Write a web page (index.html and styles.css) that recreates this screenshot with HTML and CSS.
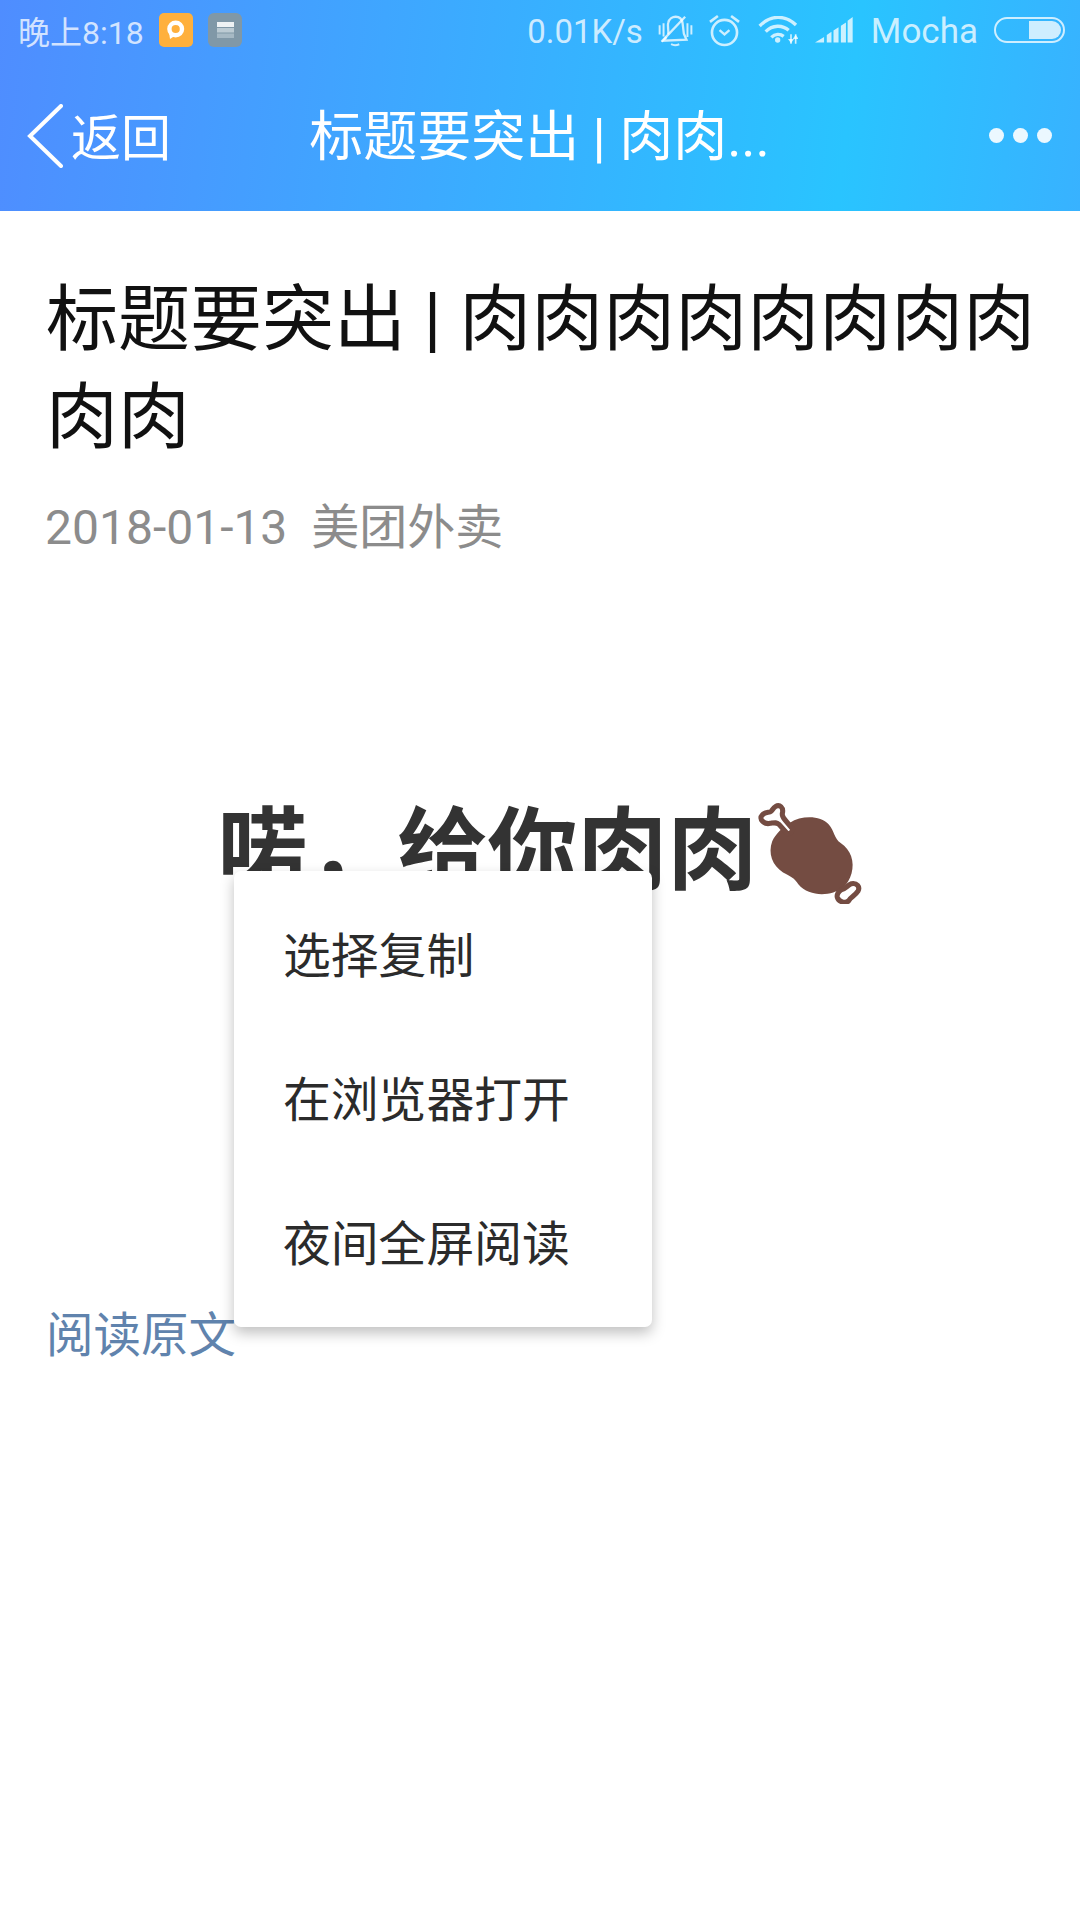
FILE: index.html
```html
<!DOCTYPE html>
<html lang="zh-CN">
<head>
<meta charset="utf-8">
<title>标题要突出</title>
<link rel="stylesheet" href="styles.css">
</head>
<body>
<div class="page">
  <header class="top">
    <div class="status">
      <div class="status-group status-left">
        <span class="clock">晚上8:18</span>
        <svg class="ico-app" viewBox="0 0 34 34"><rect width="34" height="34" rx="5" fill="#ffb03c"/><circle cx="16.700" cy="16" r="6.300" fill="none" stroke="#fff" stroke-width="4.400"/><path d="M10 19l1 7 6-4z" fill="#fff"/></svg>
        <svg class="ico-app" viewBox="0 0 34 34"><rect width="34" height="34" rx="6" fill="#8098a7"/><rect x="9" y="9" width="17" height="5" fill="#eef2f4"/><rect x="9" y="15" width="17" height="4.500" fill="#bccbd3"/><rect x="9" y="20.500" width="17" height="4.500" fill="#a6b9c4"/></svg>
      </div>
      <div class="status-group">
        <span class="speed">0.01K/s</span>
        <svg class="ico-bell" viewBox="25 22 110 100" fill="none" stroke="currentColor" stroke-width="7"><path d="M56 84c3-10-3-24 0-35 3-13 14-19 23-19 11 0 19 8 21 19l4 33 8 18-70 3 9-11"/><path d="M65 114c8 4 16 4 25 0" stroke-width="6"/><path d="M108 30 36 106"/><path d="M30 56v28M42 50v40M115 50v42M127 56v28" stroke-width="6"/></svg>
        <svg class="ico-alarm" viewBox="176 22 104 100" fill="none" stroke="currentColor" stroke-width="8"><circle cx="228" cy="78" r="38"/><path d="M213 71l15 13 15-13" stroke-width="7"/><path d="M184 46l24-18M272 46l-24-18"/></svg>
        <svg class="ico-wifi" viewBox="328 35 120 84" fill="none" stroke="currentColor" stroke-width="10"><path d="M333 65c33-34 76-34 109-3"/><path d="M351 82c21-21 50-21 69-4"/><path d="M368 99c11-11 27-11 37-3"/><circle cx="387" cy="107" r="8" fill="currentColor" stroke="none"/><path d="M427 90v28M441 118V90" stroke-width="5"/><path d="M418 104h18l-9 13zM432 104h18l-9-13z" fill="currentColor" stroke="none"/></svg>
        <svg class="ico-signal" viewBox="498 38 113 77" fill="currentColor"><path d="M498 114l27-17v17zM533 91l14-9v32h-14zM553 78l15-10v46h-15zM575 64l15-10v60h-15zM595 49l15-11v76h-15z"/></svg>
        <span class="carrier">Mocha</span>
        <svg class="ico-battery" viewBox="0 0 71 26"><rect x="1" y="1" width="69" height="24" rx="12" fill="none" stroke="currentColor" stroke-width="2"/><path d="M35 4h23a9 9 0 0 1 0 18H35z" fill="currentColor"/></svg>
      </div>
    </div>
    <nav class="nav">
      <div class="back">
        <svg class="ico-back" viewBox="0 0 36 64" fill="none" stroke="#fff" stroke-width="4" stroke-linecap="round"><path d="M34 2 3 32l31 30"/></svg>
        <span class="back-label">返回</span>
      </div>
      <div class="nav-title">标题要突出 | 肉肉...</div>
      <div class="dots"><i></i><i></i><i></i></div>
    </nav>
  </header>
  <main class="article">
    <h1 class="title">标题要突出 | 肉肉肉肉肉肉肉肉肉肉</h1>
    <div class="meta"><span>2018-01-13</span><span>美团外卖</span></div>
    <h2 class="headline">喏，给你肉肉<svg class="meat" viewBox="54 36 308 304"><path d="M150 100c35-22 90-22 115 5 17 20 15 40 35 55 30 20 42 55 32 90-10 35-30 48-54 56-33 10-78 6-103-24-10-18-25-25-45-35-32-20-45-57-32-92 10-23 30-40 52-55z" fill="#744c42"/><path d="M108 52c12-7 24 3 20 20-2 8 2 13 8 20l22 26c2 7-8 17-16 14l-24-27c-8-7-13-5-26-3-20 4-34-14-24-24 7-10 17-8 24-10 6-2 8-12 16-16z" fill="#fff" stroke="#744c42" stroke-width="15" stroke-linejoin="round"/><path d="M302 298c12-2 18-14 30-18 16-3 26 10 19 22-9 14-22 18-27 28-10 10-30 4-34-10-2-8 4-18 12-22z" fill="#fff" stroke="#744c42" stroke-width="15" stroke-linejoin="round"/></svg></h2>
    <a class="source">阅读原文</a>
  </main>
  <div class="menu">
    <div class="menu-item">选择复制</div>
    <div class="menu-item">在浏览器打开</div>
    <div class="menu-item">夜间全屏阅读</div>
  </div>
</div>
</body>
</html>
```
FILE: styles.css
```css
* { box-sizing: border-box; }
html, body { margin: 0; padding: 0; }
body {
  background: #fff;
  font-family: Roboto, "Noto Sans CJK SC", sans-serif;
}
.page { position: relative; width: 1080px; height: 1920px; overflow: hidden; background: #fff; }
.top {
  height: 211px;
  background: linear-gradient(97deg, #4f8dff 0%, #3fa6ff 35%, #29c4ff 78%, #38b2ff 100%);
  color: #fff;
}
.status {
  height: 60px;
  display: flex;
  justify-content: space-between;
  align-items: center;
  padding: 0 15px 0 18px;
  font-size: 33px;
  color: rgba(255, 255, 255, .76);
}
.status-group { display: flex; align-items: center; gap: 17px; }
.status-left { gap: 15px; }
.status-group svg { display: block; flex: none; }
.clock { font-size: 32px; }
.speed { padding-top: 2px; }
.ico-app { width: 34px; height: 34px; }
.ico-bell { width: 36px; height: 33px; margin: 0 -3px 0 -2px; }
.ico-alarm { width: 35px; height: 33px; margin: 0 -1px; }
.ico-wifi { width: 40px; height: 28px; }
.ico-signal { width: 38px; height: 26px; }
.ico-battery { width: 71px; height: 26px; }
.carrier { margin: 0 -1px 0 1px; padding-top: 2px; font-size: 35px; }
.nav {
  height: 151px;
  display: grid;
  grid-template-columns: 1fr auto 1fr;
  align-items: center;
  padding: 0 28px 0 27px;
}
.back { display: flex; align-items: center; gap: 8px; font-size: 50px; }
.back-label { padding-bottom: 4px; }
.ico-back { width: 36px; height: 64px; display: block; }
.nav-title { padding-top: 4px; font-size: 54px; line-height: 70px; }
.dots { display: flex; justify-content: flex-end; gap: 9px; }
.dots i { width: 15px; height: 15px; border-radius: 50%; background: rgba(255, 255, 255, .9); }
.article { padding: 60px 40px 0 46px; }
.title { margin: 0; font-size: 72px; line-height: 98px; font-weight: 400; color: #111; }
.meta {
  margin: 31px 0 0 -1px;
  display: flex;
  gap: 24px;
  font-size: 48px;
  line-height: 60px;
  color: #8c8c8c;
}
.headline {
  margin: 239px 0 0;
  padding-right: 6px;
  display: flex;
  justify-content: center;
  align-items: flex-start;
  font-size: 90px;
  line-height: 110px;
  font-weight: 700;
  color: #333;
}
.meat { width: 107px; height: 103px; margin: 4px 0 0 -2px; flex: none; }
.source { display: block; margin-top: 399px; font-size: 47.500px; line-height: 60px; color: #6083ad; }
.menu {
  position: absolute;
  left: 234px;
  top: 871px;
  width: 418px;
  height: 456px;
  padding: 13px 0;
  background: #fff;
  border-radius: 7px;
  box-shadow: 0 6px 14px rgba(0, 0, 0, .25);
}
.menu-item {
  height: 144px;
  padding: 0 0 8px 49px;
  display: flex;
  align-items: center;
  font-size: 47.800px;
  color: #2b2b2b;
}
```
